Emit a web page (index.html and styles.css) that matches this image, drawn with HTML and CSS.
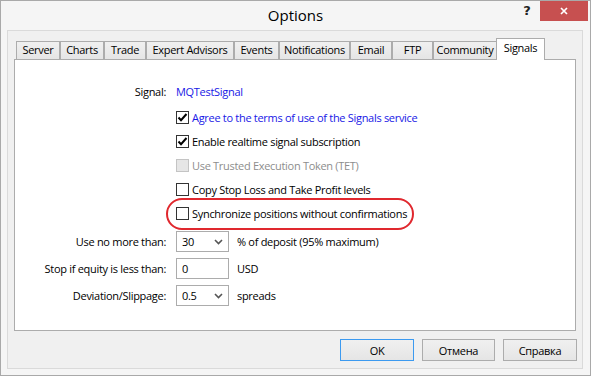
FILE: index.html
```html
<!DOCTYPE html>
<html>
<head>
<meta charset="utf-8">
<link rel="stylesheet" href="styles.css">
</head>
<body>
<div class="window">
  <div class="titlebar">
    <div></div>
    <div class="title">Options</div>
    <div class="controls">
      <div class="help">?</div>
      <div class="close">
        <svg width="8" height="8" viewBox="0 0 8 8"><path d="M1 1 L7 7 M7 1 L1 7" stroke="#fff" stroke-width="1.7"/></svg>
      </div>
    </div>
  </div>
  <div class="client">
    <div class="tabs">
      <div class="tab t-server">Server</div>
      <div class="tab t-charts">Charts</div>
      <div class="tab t-trade">Trade</div>
      <div class="tab t-ea">Expert Advisors</div>
      <div class="tab t-events">Events</div>
      <div class="tab t-notif">Notifications</div>
      <div class="tab t-email">Email</div>
      <div class="tab t-ftp">FTP</div>
      <div class="tab t-comm">Community</div>
      <div class="tab t-signals active">Signals</div>
    </div>
    <div class="panel">
      <div class="row signal-row">
        <div class="lbl">Signal:</div>
        <div class="link">MQTestSignal</div>
      </div>
      <div class="row cb-row">
        <span class="box"><svg width="11" height="11" viewBox="0 0 11 11"><path d="M1.5 5.5 L4 8.2 L9.5 2" fill="none" stroke="#000" stroke-width="2"/></svg></span>
        <span class="link">Agree to the terms of use of the Signals service</span>
      </div>
      <div class="row cb-row">
        <span class="box"><svg width="11" height="11" viewBox="0 0 11 11"><path d="M1.5 5.5 L4 8.2 L9.5 2" fill="none" stroke="#000" stroke-width="2"/></svg></span>
        <span>Enable realtime signal subscription</span>
      </div>
      <div class="row cb-row disabled">
        <span class="box"></span>
        <span>Use Trusted Execution Token (TET)</span>
      </div>
      <div class="row cb-row">
        <span class="box"></span>
        <span>Copy Stop Loss and Take Profit levels</span>
      </div>
      <div class="row cb-row highlighted">
        <span class="box"></span>
        <span>Synchronize positions without confirmations</span>
        <div class="oval"></div>
      </div>
      <div class="row field-row first">
        <div class="lbl">Use no more than:</div>
        <div class="field">30<svg class="chev" width="9" height="6" viewBox="0 0 9 6"><path d="M1 1 L4.5 4.5 L8 1" fill="none" stroke="#555" stroke-width="1.6"/></svg></div>
        <div class="after">% of deposit (95% maximum)</div>
      </div>
      <div class="row field-row">
        <div class="lbl">Stop if equity is less than:</div>
        <div class="field">0</div>
        <div class="after">USD</div>
      </div>
      <div class="row field-row">
        <div class="lbl">Deviation/Slippage:</div>
        <div class="field">0.5<svg class="chev" width="9" height="6" viewBox="0 0 9 6"><path d="M1 1 L4.5 4.5 L8 1" fill="none" stroke="#555" stroke-width="1.6"/></svg></div>
        <div class="after">spreads</div>
      </div>
    </div>
    <div class="buttons">
      <div class="btn default w74">OK</div>
      <div class="btn w73">Отмена</div>
      <div class="btn w74">Справка</div>
    </div>
  </div>
</div>
</body>
</html>
```

FILE: styles.css
```css
* { box-sizing: border-box; }
html, body { margin: 0; padding: 0; }
body {
  font-family: "Open Sans", "Noto Sans", sans-serif;
  font-size: 11px;
  letter-spacing: -0.3px;
  color: #000;
  background: #fff;
}
.window {
  width: 591px;
  height: 376px;
  border: 1px solid #a9a9a9;
  background: #f5f5f5;
  display: flex;
  flex-direction: column;
}
.titlebar {
  height: 29px;
  display: grid;
  grid-template-columns: 1fr auto 1fr;
}
.title {
  font-size: 15px;
  letter-spacing: 0;
  line-height: 29px;
  padding-top: 0;
  color: #000;
}
.controls {
  display: flex;
  justify-content: flex-end;
  align-items: flex-start;
}
.help {
  font-family: "DejaVu Sans", sans-serif;
  font-weight: bold;
  font-size: 13px;
  letter-spacing: 0;
  width: 16px;
  text-align: center;
  margin-top: 2px;
  margin-right: 5px;
  color: #222;
}
.close {
  width: 48px;
  height: 20px;
  margin-right: 2px;
  background: #c75050;
  display: flex;
  align-items: center;
  justify-content: center;
}
.client {
  margin: 0 7px 0 6px;
  height: 339px;
  border: 1px solid #dadada;
  background: #f0f0f0;
  padding: 7px 6px 0 6px;
}
.tabs {
  height: 21px;
  display: flex;
  align-items: flex-end;
  padding-left: 2px;
}
.tab {
  height: 18px;
  border: 1px solid #acacac;
  border-bottom: none;
  background: linear-gradient(#f0f0f0, #e5e5e5);
  text-align: center;
  line-height: 16px;
  white-space: nowrap;
}
.tab.active {
  height: 22px;
  margin-bottom: -1px;
  background: #fff;
  position: relative;
  z-index: 1;
  line-height: 17px;
}
.t-server { width: 44px; }
.t-charts { width: 44px; }
.t-trade { width: 42px; }
.t-ea { width: 88px; }
.t-events { width: 45px; }
.t-notif { width: 71px; }
.t-email { width: 42px; }
.t-ftp { width: 41px; }
.t-comm { width: 64px; }
.t-signals { width: 49px; margin-left: -1px; }
.panel {
  height: 272px;
  border: 1px solid #acacac;
  background: #fff;
  padding-top: 19px;
}
.row {
  display: flex;
  align-items: center;
  height: 24px;
  white-space: nowrap;
}
.lbl {
  width: 151px;
  text-align: right;
  margin-right: 10px;
}
.link { color: #1717e6; }
.signal-row { margin-bottom: 2px; }
.cb-row { padding-left: 161px; }
.box {
  width: 13px;
  height: 13px;
  border: 1px solid #333;
  background: #fff;
  margin-right: 3px;
  display: flex;
  align-items: center;
  justify-content: center;
}
.disabled { color: #8d8d8d; }
.disabled .box {
  border-color: #c4c4c4;
  background: #e6e6e6;
}
.highlighted { position: relative; }
.oval {
  position: absolute;
  left: 151px;
  top: -3px;
  width: 248px;
  height: 32px;
  border: 2px solid #e0282e;
  border-radius: 16px;
}
.field-row { height: 27px; }
.field-row.first { margin-top: 3px; }
.field {
  width: 53px;
  height: 21px;
  border: 1px solid #acacac;
  background: #fff;
  padding-left: 5px;
  display: flex;
  align-items: center;
  position: relative;
}
.chev { margin-left: auto; margin-right: 5px; }
.after { margin-left: 8px; }
.buttons {
  display: flex;
  justify-content: flex-end;
  gap: 8px;
  margin-top: 8px;
  margin-right: -1px;
}
.btn {
  height: 22px;
  border: 1px solid #acacac;
  background: linear-gradient(#f0f0f0, #e5e5e5);
  display: flex;
  align-items: center;
  justify-content: center;
}
.btn.default { border-color: #3c9af0; }
.w74 { width: 74px; }
.w73 { width: 73px; }
```
